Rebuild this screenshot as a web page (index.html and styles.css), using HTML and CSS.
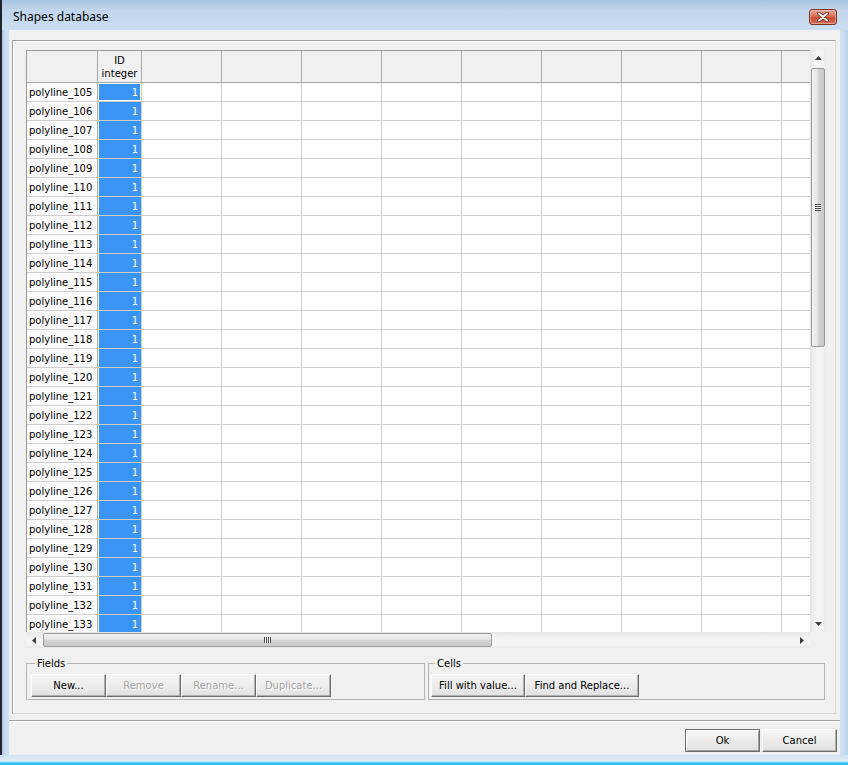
FILE: index.html
```html
<!DOCTYPE html>
<html>
<head>
<meta charset="utf-8">
<title>Shapes database</title>
<link rel="stylesheet" href="styles.css">
</head>
<body>
<div class="window">
  <div class="titlebar">
    <span class="title">Shapes database</span>
    <div class="close"><svg width="14" height="10" viewBox="0 0 14 10"><path d="M3 1.5 L11 8.5 M11 1.5 L3 8.5" stroke="#5a1a10" stroke-width="3.6" stroke-linecap="round"/><path d="M3 1.5 L11 8.5 M11 1.5 L3 8.5" stroke="#fff" stroke-width="2" stroke-linecap="round"/></svg></div>
  </div>
  <div class="client">
    <div class="panel">
      <div class="gridarea">
        <div class="gridview">
          <table class="grid">
            <colgroup><col class="c-row"><col class="c-id"><col class="c-n"><col class="c-n"><col class="c-n"><col class="c-n"><col class="c-n"><col class="c-n"><col class="c-n"><col class="c-n"><col class="c-n"></colgroup>
            <tr class="head"><th class="corner"></th><th>ID<br>integer</th><th></th><th></th><th></th><th></th><th></th><th></th><th></th><th></th><th></th></tr>
            <tr><th class="rl">polyline_105</th><td class="v focus">1</td><td></td><td></td><td></td><td></td><td></td><td></td><td></td><td></td><td></td></tr>
            <tr><th class="rl">polyline_106</th><td class="v">1</td><td></td><td></td><td></td><td></td><td></td><td></td><td></td><td></td><td></td></tr>
            <tr><th class="rl">polyline_107</th><td class="v">1</td><td></td><td></td><td></td><td></td><td></td><td></td><td></td><td></td><td></td></tr>
            <tr><th class="rl">polyline_108</th><td class="v">1</td><td></td><td></td><td></td><td></td><td></td><td></td><td></td><td></td><td></td></tr>
            <tr><th class="rl">polyline_109</th><td class="v">1</td><td></td><td></td><td></td><td></td><td></td><td></td><td></td><td></td><td></td></tr>
            <tr><th class="rl">polyline_110</th><td class="v">1</td><td></td><td></td><td></td><td></td><td></td><td></td><td></td><td></td><td></td></tr>
            <tr><th class="rl">polyline_111</th><td class="v">1</td><td></td><td></td><td></td><td></td><td></td><td></td><td></td><td></td><td></td></tr>
            <tr><th class="rl">polyline_112</th><td class="v">1</td><td></td><td></td><td></td><td></td><td></td><td></td><td></td><td></td><td></td></tr>
            <tr><th class="rl">polyline_113</th><td class="v">1</td><td></td><td></td><td></td><td></td><td></td><td></td><td></td><td></td><td></td></tr>
            <tr><th class="rl">polyline_114</th><td class="v">1</td><td></td><td></td><td></td><td></td><td></td><td></td><td></td><td></td><td></td></tr>
            <tr><th class="rl">polyline_115</th><td class="v">1</td><td></td><td></td><td></td><td></td><td></td><td></td><td></td><td></td><td></td></tr>
            <tr><th class="rl">polyline_116</th><td class="v">1</td><td></td><td></td><td></td><td></td><td></td><td></td><td></td><td></td><td></td></tr>
            <tr><th class="rl">polyline_117</th><td class="v">1</td><td></td><td></td><td></td><td></td><td></td><td></td><td></td><td></td><td></td></tr>
            <tr><th class="rl">polyline_118</th><td class="v">1</td><td></td><td></td><td></td><td></td><td></td><td></td><td></td><td></td><td></td></tr>
            <tr><th class="rl">polyline_119</th><td class="v">1</td><td></td><td></td><td></td><td></td><td></td><td></td><td></td><td></td><td></td></tr>
            <tr><th class="rl">polyline_120</th><td class="v">1</td><td></td><td></td><td></td><td></td><td></td><td></td><td></td><td></td><td></td></tr>
            <tr><th class="rl">polyline_121</th><td class="v">1</td><td></td><td></td><td></td><td></td><td></td><td></td><td></td><td></td><td></td></tr>
            <tr><th class="rl">polyline_122</th><td class="v">1</td><td></td><td></td><td></td><td></td><td></td><td></td><td></td><td></td><td></td></tr>
            <tr><th class="rl">polyline_123</th><td class="v">1</td><td></td><td></td><td></td><td></td><td></td><td></td><td></td><td></td><td></td></tr>
            <tr><th class="rl">polyline_124</th><td class="v">1</td><td></td><td></td><td></td><td></td><td></td><td></td><td></td><td></td><td></td></tr>
            <tr><th class="rl">polyline_125</th><td class="v">1</td><td></td><td></td><td></td><td></td><td></td><td></td><td></td><td></td><td></td></tr>
            <tr><th class="rl">polyline_126</th><td class="v">1</td><td></td><td></td><td></td><td></td><td></td><td></td><td></td><td></td><td></td></tr>
            <tr><th class="rl">polyline_127</th><td class="v">1</td><td></td><td></td><td></td><td></td><td></td><td></td><td></td><td></td><td></td></tr>
            <tr><th class="rl">polyline_128</th><td class="v">1</td><td></td><td></td><td></td><td></td><td></td><td></td><td></td><td></td><td></td></tr>
            <tr><th class="rl">polyline_129</th><td class="v">1</td><td></td><td></td><td></td><td></td><td></td><td></td><td></td><td></td><td></td></tr>
            <tr><th class="rl">polyline_130</th><td class="v">1</td><td></td><td></td><td></td><td></td><td></td><td></td><td></td><td></td><td></td></tr>
            <tr><th class="rl">polyline_131</th><td class="v">1</td><td></td><td></td><td></td><td></td><td></td><td></td><td></td><td></td><td></td></tr>
            <tr><th class="rl">polyline_132</th><td class="v">1</td><td></td><td></td><td></td><td></td><td></td><td></td><td></td><td></td><td></td></tr>
            <tr><th class="rl">polyline_133</th><td class="v">1</td><td></td><td></td><td></td><td></td><td></td><td></td><td></td><td></td><td></td></tr>
          </table>
        </div>
        <div class="vscroll">
          <div class="sbtn"><svg width="7" height="4" viewBox="0 0 7 4"><polygon points="0,4 3.5,0 7,4" fill="#3c3c3c"/></svg></div>
          <div class="vtrack">
            <div class="vthumb"><span class="vgrip"></span></div>
          </div>
          <div class="sbtn"><svg width="7" height="4" viewBox="0 0 7 4"><polygon points="0,0 3.5,4 7,0" fill="#3c3c3c"/></svg></div>
        </div>
        <div class="hscroll">
          <div class="sbtn"><svg width="4" height="7" viewBox="0 0 4 7"><polygon points="4,0 0,3.5 4,7" fill="#3c3c3c"/></svg></div>
          <div class="htrack">
            <div class="hthumb"><span class="hgrip"></span></div>
          </div>
          <div class="sbtn"><svg width="4" height="7" viewBox="0 0 4 7"><polygon points="0,0 4,3.5 0,7" fill="#3c3c3c"/></svg></div>
        </div>
        <div class="sbcorner"></div>
      </div>
      <div class="groups">
        <fieldset class="group g-fields">
          <legend>Fields</legend>
          <div class="btns">
            <button class="btn w75">New...</button>
            <button class="btn w75" disabled>Remove</button>
            <button class="btn w75" disabled>Rename...</button>
            <button class="btn w75" disabled>Duplicate...</button>
          </div>
        </fieldset>
        <fieldset class="group g-cells">
          <legend>Cells</legend>
          <div class="btns">
            <button class="btn w94">Fill with value...</button>
            <button class="btn w114">Find and Replace...</button>
          </div>
        </fieldset>
      </div>
    </div>
    <div class="sep"></div>
    <div class="footer">
      <button class="btn w75 default">Ok</button>
      <button class="btn w75">Cancel</button>
    </div>
  </div>
  <div class="bottomedge"></div>
</div>
</body>
</html>
```

FILE: styles.css
```css
* { box-sizing: border-box; }
html, body { margin: 0; padding: 0; }
body {
  width: 848px;
  height: 765px;
  overflow: hidden;
  font-family: "DejaVu Sans", "Liberation Sans", sans-serif;
  font-size: 10px;
  color: #000;
}
.window {
  width: 848px;
  height: 765px;
  display: flex;
  flex-direction: column;
  background:
    linear-gradient(to right, #23232f 0, #23232f 2px, transparent 2px),
    linear-gradient(to right, #a9c7e6 2px, #cfe0f2 6px, #cfe0f2 842px, #b9d0e8 848px);
}
.titlebar {
  height: 30px;
  flex: none;
  display: flex;
  align-items: flex-start;
  padding-left: 13px;
  background:
    linear-gradient(to right, #23232f 0, #23232f 2px, transparent 2px),
    linear-gradient(#aac4e0, #c2d7ed 35%, #cbdef1 100%);
}
.title {
  font-family: "Noto Sans", "Liberation Sans", sans-serif;
  font-size: 12px;
  line-height: 14px;
  padding-top: 10px;
  color: #000;
}
.close {
  margin-left: auto;
  margin-right: 11px;
  margin-top: 9px;
  width: 28px;
  height: 16px;
  border: 1px solid #7b3326;
  border-radius: 3px;
  background: linear-gradient(#eaa493, #d8735b 45%, #c44a31 55%, #d6735a);
  display: flex;
  align-items: center;
  justify-content: center;
  box-shadow: inset 0 0 0 1px rgba(255,220,210,0.45);
}
.client {
  flex: 1;
  min-height: 0;
  margin: 0 8px 0 9px;
  background: #f0f0f0;
  display: flex;
  flex-direction: column;
}
.bottomedge {
  height: 10px;
  flex: none;
  background: linear-gradient(#cfe0f2 0, #e2ecf6 6px, #9fdff3 7px, #2fc2ea 8px, #2fc2ea 10px);
}
.panel {
  margin: 10px 4px 0 3px;
  height: 674px;
  flex: none;
  border: 1px solid #a0a0a0;
  border-right-color: #d8d8d8;
  border-bottom-color: #d8d8d8;
  box-shadow: inset 1px 1px 0 #fff;
  padding: 9px 9px 0 13px;
}
.gridarea {
  display: grid;
  grid-template-columns: 784px 16px;
  grid-template-rows: 582px 16px;
}
.gridview {
  overflow: hidden;
  background: #fff;
}
.grid {
  table-layout: fixed;
  border-collapse: separate;
  border-spacing: 0;
  width: 836px;
  border-top: 1px solid #9a9a9a;
  border-left: 1px solid #9a9a9a;
}
.c-row { width: 71px; }
.c-id { width: 44px; }
.c-n { width: 80px; }
.grid th, .grid td {
  padding: 1px 0 0 0;
  height: 19px;
  border-right: 1px solid #cdcdcd;
  border-bottom: 1px solid #cdcdcd;
  font-weight: normal;
  white-space: nowrap;
  overflow: hidden;
  line-height: 12px;
}
.grid .head th {
  height: 32px;
  background: #f0f0f0;
  border-right: 1px solid #a9a9a9;
  border-bottom: 1px solid #a9a9a9;
  text-align: center;
  line-height: 13px;
  padding-top: 1px;
}
.grid th.rl {
  background: #fbfbfb;
  text-align: left;
  padding-left: 2px;
  border-right: 1px solid #a9a9a9;
  border-bottom: 1px solid #cdcdcd;
}
.grid td.v {
  background: #3994f3;
  box-shadow: inset 1px 0 0 #fff;
  color: #fff;
  text-align: right;
  padding-right: 3px;
}
.grid td.v.focus {
  box-shadow: inset 1px 1px 0 #fff, inset -1px -1px 0 #fff;
}
.vscroll {
  display: flex;
  flex-direction: column;
  background: linear-gradient(to right, #e6e6e6, #f4f4f4 40%, #f4f4f4 80%, #e9e9e9);
}
.sbtn {
  width: 16px;
  height: 16px;
  flex: none;
  display: flex;
  align-items: center;
  justify-content: center;
}
.vtrack {
  flex: 1;
  padding-top: 2px;
}
.vthumb {
  margin: 0 1px;
  height: 279px;
  border: 1px solid #9a9a9a;
  border-radius: 2px;
  background: linear-gradient(to right, #f3f3f3, #e4e4e4 45%, #d2d2d2 55%, #c9c9c9);
  display: flex;
  align-items: center;
  justify-content: center;
}
.vgrip {
  width: 6px;
  height: 7px;
  background: repeating-linear-gradient(#505050 0 1px, #f0f0f0 1px 2px);
}
.hscroll {
  display: flex;
  background: linear-gradient(#e6e6e6, #f4f4f4 40%, #f4f4f4 80%, #e9e9e9);
}
.htrack {
  flex: 1;
  padding-left: 1px;
}
.hthumb {
  margin-top: 1px;
  width: 449px;
  height: 14px;
  border: 1px solid #9a9a9a;
  border-radius: 2px;
  background: linear-gradient(#f3f3f3, #e4e4e4 45%, #d2d2d2 55%, #c9c9c9);
  display: flex;
  align-items: center;
  justify-content: center;
}
.hgrip {
  width: 7px;
  height: 6px;
  background: repeating-linear-gradient(to right, #505050 0 1px, #f0f0f0 1px 2px);
}
.sbcorner { background: #f0f0f0; }
.groups {
  display: flex;
  gap: 3px;
  margin-top: 9px;
}
.group {
  margin: 0;
  min-width: 0;
  border: 1px solid #b4b4b4;
  padding: 4px 4px 2px 4px;
}
.g-fields { width: 399px; }
.g-cells { width: 397px; padding-left: 2px; }
.group legend {
  padding: 0 2px;
  margin-left: 4px;
  font-size: 10px;
  line-height: 13px;
}
.btns { display: flex; }
.btn {
  height: 23px;
  font-family: "DejaVu Sans", "Liberation Sans", sans-serif;
  font-size: 10px;
  color: #000;
  padding: 0;
  border: 1px solid;
  border-color: #fff #6d6d6d #6d6d6d #fff;
  box-shadow: inset -1px -1px 0 #b0b0b0;
  background: linear-gradient(#f6f6f6, #ececec 50%, #e1e1e1);
  border-radius: 0;
}
.btn:disabled {
  color: #a3a3a3;
  text-shadow: 1px 1px 0 #fff;
}
.btn.default {
  border-color: #6d6d6d;
  box-shadow: inset 1px 1px 0 #fff, inset -1px -1px 0 #a0a0a0;
}
.w75 { width: 75px; }
.w94 { width: 94px; }
.w114 { width: 114px; }
.sep {
  margin-top: 6px;
  height: 2px;
  flex: none;
  border-top: 1px solid #a0a0a0;
  border-bottom: 1px solid #fff;
}
.footer {
  display: flex;
  justify-content: flex-end;
  gap: 2px;
  padding: 7px 3px 0 0;
}
```
